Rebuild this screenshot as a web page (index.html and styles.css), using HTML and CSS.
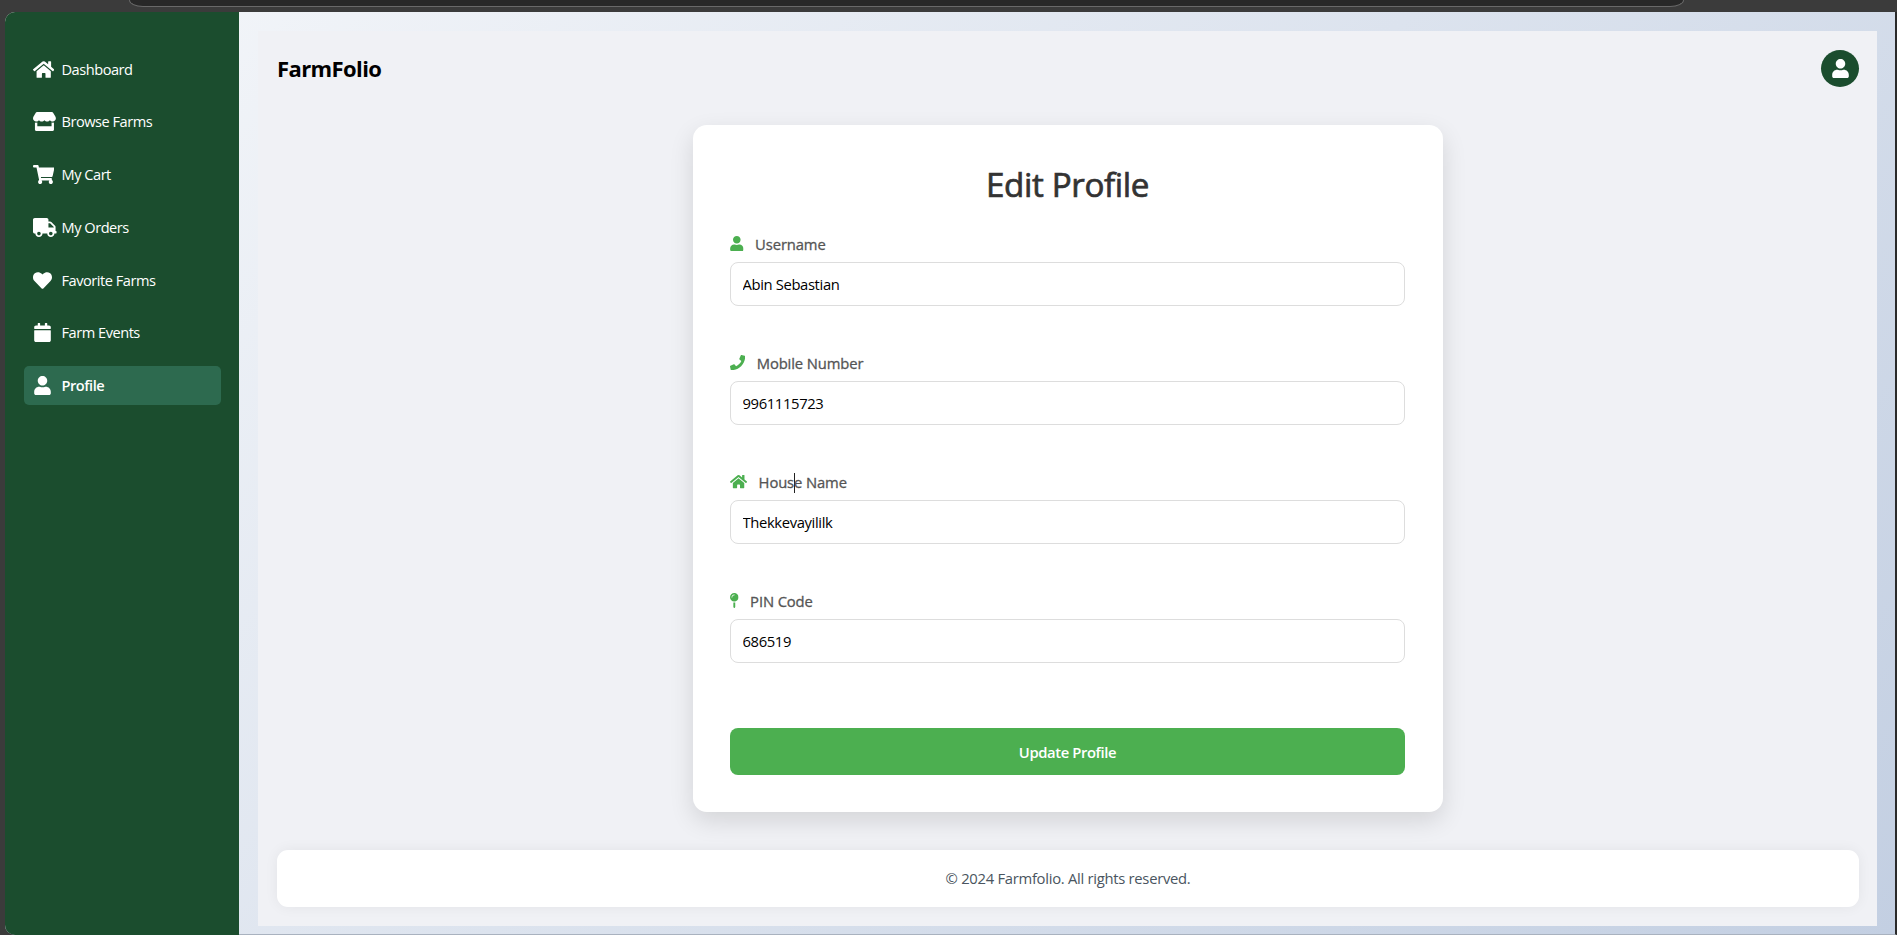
FILE: index.html
```html
<!DOCTYPE html>
<html lang="en">
<head>
<meta charset="utf-8">
<title>FarmFolio - Edit Profile</title>
<link rel="stylesheet" href="styles.css">
</head>
<body>
<svg class="sprite" aria-hidden="true">
  <symbol id="home" viewBox="0 0 576 512"><path d="M280.37 148.26L96 300.11V464a16 16 0 0 0 16 16l112.06-.29a16 16 0 0 0 15.92-16V368a16 16 0 0 1 16-16h64a16 16 0 0 1 16 16v95.64a16 16 0 0 0 16 16.05L464 480a16 16 0 0 0 16-16V300L295.67 148.26a12.19 12.19 0 0 0-15.3 0zM571.6 251.47L488 182.56V44.05a12 12 0 0 0-12-12h-56a12 12 0 0 0-12 12v72.61L318.47 43a48 48 0 0 0-61 0L4.34 251.47a12 12 0 0 0-1.6 16.9l25.5 31A12 12 0 0 0 45.15 301l235.22-193.74a12.19 12.19 0 0 1 15.3 0L530.9 301a12 12 0 0 0 16.9-1.6l25.5-31a12 12 0 0 0-1.7-16.93z"/></symbol>
  <symbol id="store" viewBox="0 0 616 512"><path d="M602 118.6L537.1 15C531.3 5.7 521 0 510 0H106C95 0 84.7 5.7 78.9 15L14 118.6c-33.5 53.5-3.8 127.9 58.8 136.4 4.5.6 9.1.9 13.7.9 29.6 0 55.8-13 73.8-33.1 18 20.1 44.3 33.1 73.8 33.1 29.6 0 55.8-13 73.8-33.1 18 20.1 44.3 33.1 73.8 33.1 29.6 0 55.8-13 73.8-33.1 18.1 20.1 44.3 33.1 73.8 33.1 4.7 0 9.2-.3 13.7-.9 62.8-8.4 92.6-82.8 59-136.4zM529.5 288c-10 0-19.9-1.5-29.5-3.8V384H116v-99.8c-9.6 2.2-19.5 3.8-29.5 3.8-6 0-12.1-.4-18-1.2-5.6-.8-11.1-2.1-16.4-3.6V480c0 17.7 14.3 32 32 32h448c17.7 0 32-14.3 32-32V283.2c-5.4 1.6-10.8 2.9-16.4 3.6-6.1.8-12.1 1.2-18.2 1.2z"/></symbol>
  <symbol id="cart" viewBox="0 0 576 512"><path d="M528.12 301.319l47.273-208C578.806 78.301 567.391 64 551.99 64H159.208l-9.166-44.81C147.758 8.021 137.93 0 126.529 0H24C10.745 0 0 10.745 0 24v16c0 13.255 10.745 24 24 24h69.883l70.248 343.435C147.325 417.1 136 435.222 136 456c0 30.928 25.072 56 56 56s56-25.072 56-56c0-15.674-6.447-29.835-16.824-40h209.647C430.447 426.165 424 440.326 424 456c0 30.928 25.072 56 56 56s56-25.072 56-56c0-22.172-12.888-41.332-31.579-50.405l5.517-24.276c3.413-15.018-8.002-29.319-23.403-29.319H218.117l-6.545-32h293.145c11.206 0 20.92-7.754 23.403-18.681z"/></symbol>
  <symbol id="truck" viewBox="0 0 640 512"><path d="M624 352h-16V243.9c0-12.7-5.1-24.9-14.1-33.9L494 110.1c-9-9-21.2-14.1-33.9-14.1H416V48c0-26.5-21.5-48-48-48H48C21.5 0 0 21.5 0 48v320c0 26.5 21.5 48 48 48h16c0 53 43 96 96 96s96-43 96-96h128c0 53 43 96 96 96s96-43 96-96h48c8.8 0 16-7.2 16-16v-32c0-8.8-7.2-16-16-16zM160 464c-26.5 0-48-21.5-48-48s21.5-48 48-48 48 21.5 48 48-21.5 48-48 48zm320 0c-26.5 0-48-21.5-48-48s21.5-48 48-48 48 21.5 48 48-21.5 48-48 48zm80-208H416V144h44.1l99.9 99.9V256z"/></symbol>
  <symbol id="heart" viewBox="0 0 512 512"><path d="M462.3 62.6C407.5 15.9 326 24.3 275.7 76.2L256 96.5l-19.7-20.3C186.1 24.3 104.5 15.9 49.7 62.6c-62.8 53.6-66.1 149.8-9.9 207.9l193.5 199.8c12.5 12.9 32.8 12.9 45.3 0l193.5-199.8c56.3-58.1 53-154.3-9.8-207.9z"/></symbol>
  <symbol id="calendar" viewBox="0 0 448 512"><path d="M12 192h424c6.6 0 12 5.4 12 12v260c0 26.5-21.5 48-48 48H48c-26.5 0-48-21.5-48-48V204c0-6.6 5.4-12 12-12zm436-44v-36c0-26.5-21.5-48-48-48h-48V12c0-6.6-5.4-12-12-12h-40c-6.6 0-12 5.4-12 12v52H160V12c0-6.6-5.4-12-12-12h-40c-6.6 0-12 5.4-12 12v52H48C21.5 64 0 85.5 0 112v36c0 6.6 5.4 12 12 12h424c6.6 0 12-5.4 12-12z"/></symbol>
  <symbol id="user" viewBox="0 0 448 512"><path d="M224 256c70.7 0 128-57.3 128-128S294.7 0 224 0 96 57.3 96 128s57.3 128 128 128zm89.6 32h-16.7c-22.2 10.2-46.9 16-72.9 16s-50.6-5.8-72.9-16h-16.7C60.2 288 0 348.2 0 422.4V464c0 26.5 21.5 48 48 48h352c26.5 0 48-21.5 48-48v-41.6c0-74.2-60.2-134.4-134.4-134.4z"/></symbol>
  <symbol id="phone" viewBox="0 0 512 512"><path d="M493.4 24.6l-104-24c-11.3-2.6-22.9 3.3-27.5 13.9l-48 112c-4.2 9.8-1.4 21.3 6.9 28l60.6 49.6c-36 76.7-98.9 140.5-177.2 177.2l-49.6-60.6c-6.8-8.3-18.2-11.1-28-6.9l-112 48C3.9 366.5-2 378.1.6 389.4l24 104C27.1 504.2 36.7 512 48 512c256.1 0 464-207.5 464-464 0-11.2-7.7-20.9-18.6-23.4z"/></symbol>
  <symbol id="pin" viewBox="0 0 288 512"><path d="M112 316.94v156.69l22.02 33.02c4.75 7.12 15.22 7.12 19.97 0L176 473.63V316.94c-10.39 1.92-21.06 3.06-32 3.06s-21.61-1.14-32-3.06zM144 0C64.47 0 0 64.47 0 144s64.47 144 144 144 144-64.47 144-144S223.53 0 144 0zm0 76c-37.5 0-68 30.5-68 68 0 6.62-5.38 12-12 12s-12-5.38-12-12c0-50.73 41.28-92 92-92 6.62 0 12 5.38 12 12s-5.38 12-12 12z"/></symbol>
</svg>
<div class="browser-bar"><div class="address"></div></div>
<div class="window">
  <nav class="sidebar">
    <a class="nav-item"><svg class="w-576"><use href="#home"/></svg><span>Dashboard</span></a>
    <a class="nav-item"><svg class="w-616"><use href="#store"/></svg><span>Browse Farms</span></a>
    <a class="nav-item"><svg class="w-576"><use href="#cart"/></svg><span>My Cart</span></a>
    <a class="nav-item"><svg class="w-640"><use href="#truck"/></svg><span>My Orders</span></a>
    <a class="nav-item"><svg><use href="#heart"/></svg><span>Favorite Farms</span></a>
    <a class="nav-item"><svg><use href="#calendar"/></svg><span>Farm Events</span></a>
    <a class="nav-item active"><svg><use href="#user"/></svg><span>Profile</span></a>
  </nav>
  <div class="page">
    <main class="content">
      <header class="header">
        <h1 class="brand">FarmFolio</h1>
        <div class="avatar"><svg><use href="#user"/></svg></div>
      </header>
      <form class="card">
        <h2 class="card-title">Edit Profile</h2>
        <div class="field">
          <label class="label"><svg class="i-user"><use href="#user"/></svg><span>Username</span></label>
          <input class="input" type="text" value="Abin Sebastian">
        </div>
        <div class="field">
          <label class="label"><svg class="i-phone"><use href="#phone"/></svg><span>Mobile Number</span></label>
          <input class="input" type="text" value="9961115723">
        </div>
        <div class="field">
          <label class="label"><svg class="i-home"><use href="#home"/></svg><span>Hous<i class="caret"></i>e Name</span></label>
          <input class="input" type="text" value="Thekkevayililk">
        </div>
        <div class="field">
          <label class="label"><svg class="i-pin"><use href="#pin"/></svg><span>PIN Code</span></label>
          <input class="input" type="text" value="686519">
        </div>
        <button class="submit" type="button">Update Profile</button>
      </form>
      <footer class="footer"><span>© 2024 Farmfolio. All rights reserved.</span></footer>
    </main>
  </div>
</div>
</body>
</html>
```
FILE: styles.css
```css
* { box-sizing: border-box; }
body {
  margin: 0;
  height: 935px;
  overflow: hidden;
  background: #3b3b3b;
  font-family: "Open Sans", "Noto Sans", sans-serif;
  font-size: 14.8px;
  display: flex;
  flex-direction: column;
}
.sprite { position: absolute; width: 0; height: 0; }
svg { fill: currentColor; flex: none; display: block; }

.browser-bar { height: 12px; flex: none; padding: 0 213px 0 129px; }
.address {
  height: 7px;
  background: #282828;
  border: 1px solid #696969;
  border-top: 0;
  border-radius: 0 0 14px 14px / 0 0 7px 7px;
}

.window {
  height: 923px;
  margin-left: 5px;
  border-right: 2px solid #2a2a2a;
  border-bottom: 1px solid #a9b2bf;
  border-radius: 10px 0 0 10px;
  background: linear-gradient(135deg, #f5f7fa 0%, #c3cfe2 100%);
  display: flex;
}

.sidebar {
  width: 234px;
  flex: none;
  margin-bottom: -1px;
  padding: 37.5px 18px 0 19px;
  background: #1b4d2e;
  border-radius: 10px 0 0 10px;
  display: flex;
  flex-direction: column;
  gap: 13.8px;
}
.nav-item {
  height: 39px;
  padding-left: 9px;
  border-radius: 5px;
  color: #fff;
  display: grid;
  grid-template-columns: 28.5px 1fr;
  align-items: center;
  font-size: 14.6px;
  letter-spacing: -0.48px;
  white-space: nowrap;
}
.nav-item span { padding-bottom: 1px; }
.nav-item svg { width: 19px; height: 19px; }
.nav-item .w-576 { width: 21.4px; }
.nav-item .w-616 { width: 22.9px; }
.nav-item .w-640 { width: 23.75px; }
.nav-item.active { background: #2d6a4f; font-weight: 600; }

.page { flex: 1; padding: 19px 18px 8px 19px; }
.content {
  height: 895px;
  padding: 19px 18px 19px 19px;
  background: #f0f1f5;
  display: flex;
  flex-direction: column;
}
.header {
  height: 37px;
  display: flex;
  align-items: center;
  justify-content: space-between;
}
.brand { margin: 0; padding-bottom: 1px; font-size: 22px; font-weight: 700; letter-spacing: -0.6px; color: #000; }
.avatar {
  width: 38px;
  height: 37px;
  border-radius: 50%;
  background: #1b4d2e;
  color: #fff;
  display: grid;
  place-items: center;
}
.avatar svg { width: 17px; height: 19px; }

.card {
  width: 750px;
  height: 687px;
  margin: 38px auto 0;
  padding: 37px 38px 0 37px;
  background: #fff;
  border-radius: 14px;
  box-shadow: 0 9px 24px rgba(0, 0, 0, 0.12);
}
.card-title {
  margin: 0 0 25px;
  height: 46px;
  line-height: 46px;
  text-align: center;
  font-size: 33.2px;
  font-weight: 500;
  letter-spacing: -0.4px;
  color: #333;
  -webkit-text-stroke: 0.7px #333;
}
.field { height: 119px; }
.label {
  height: 21px;
  margin-bottom: 7.5px;
  display: flex;
  align-items: center;
  gap: 11.5px;
  font-weight: 500;
  letter-spacing: -0.12px;
  color: #555;
  -webkit-text-stroke: 0.3px #555;
}
.label svg { height: 15.2px; color: #4caf50; }
.i-user { width: 13.6px; }
.i-phone { width: 15.2px; }
.i-home { width: 17.1px; }
.i-pin { width: 8.6px; }
.caret {
  display: inline-block;
  width: 1px;
  height: 20px;
  margin: -6px -1px -4px 0;
  vertical-align: middle;
  background: #222;
}
.input {
  display: block;
  width: 100%;
  height: 44.4px;
  padding: 0 12px 0 11.5px;
  border: 1px solid #ddd;
  border-radius: 8px;
  background: #fff;
  color: #000;
  font: inherit;
  letter-spacing: -0.37px;
}
.submit {
  display: block;
  width: 100%;
  height: 47px;
  margin-top: 19px;
  border: 0;
  border-radius: 8px;
  background: #4caf50;
  color: #fff;
  font: inherit;
  font-weight: 600;
  letter-spacing: -0.4px;
}
.footer {
  height: 57px;
  margin-top: 38px;
  padding-bottom: 2px;
  border-radius: 11px;
  background: #fff;
  box-shadow: 0 0 14px rgba(0, 0, 0, 0.06);
  color: #4a5560;
  letter-spacing: -0.28px;
  display: grid;
  place-items: center;
}
```
